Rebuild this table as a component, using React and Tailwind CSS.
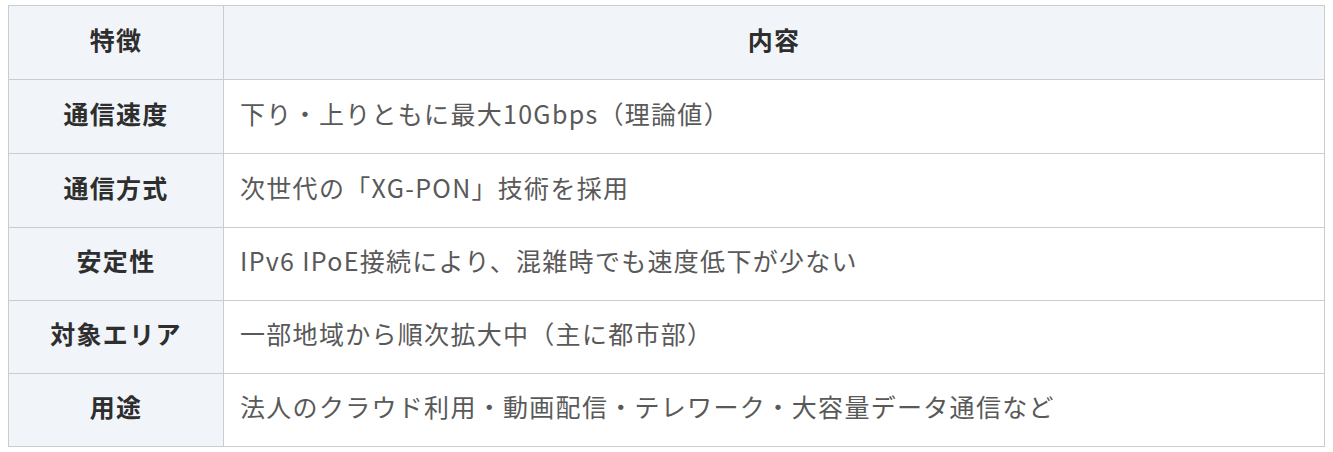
const rows = [
  ["通信速度", "下り・上りともに最大10Gbps（理論値）"],
  ["通信方式", "次世代の「XG-PON」技術を採用"],
  ["安定性", "IPv6 IPoE接続により、混雑時でも速度低下が少ない"],
  ["対象エリア", "一部地域から順次拡大中（主に都市部）"],
  ["用途", "法人のクラウド利用・動画配信・テレワーク・大容量データ通信など"],
];

export default function App() {
  return (
    <div className="w-[1333px] h-[452px] bg-white px-2 pt-[5px] font-['Noto_Sans_CJK_JP','Noto_Sans',sans-serif]">
      <table className="w-[1317px] border-collapse table-fixed text-[25px] tracking-[1.3px]">
        <colgroup>
          <col className="w-[215px]" />
          <col />
        </colgroup>
        <thead>
          <tr className="h-[74px] bg-[#f1f4f9]">
            <th className="border border-[#cccccc] pb-[6px] text-center font-bold text-[#2e2e2e]">特徴</th>
            <th className="border border-[#cccccc] pb-[6px] text-center font-bold text-[#2e2e2e]">内容</th>
          </tr>
        </thead>
        <tbody>
          {rows.map(([k, v], i) => (
            <tr key={k} className={i < 2 ? "h-[74px]" : "h-[73px]"}>
              <td className="border border-[#cccccc] bg-[#f1f4f9] pb-[6px] text-center font-bold text-[#2e2e2e]">{k}</td>
              <td className="border border-[#cccccc] pl-4 pb-[6px] text-left text-[#595959]">{v}</td>
            </tr>
          ))}
        </tbody>
      </table>
    </div>
  );
}
